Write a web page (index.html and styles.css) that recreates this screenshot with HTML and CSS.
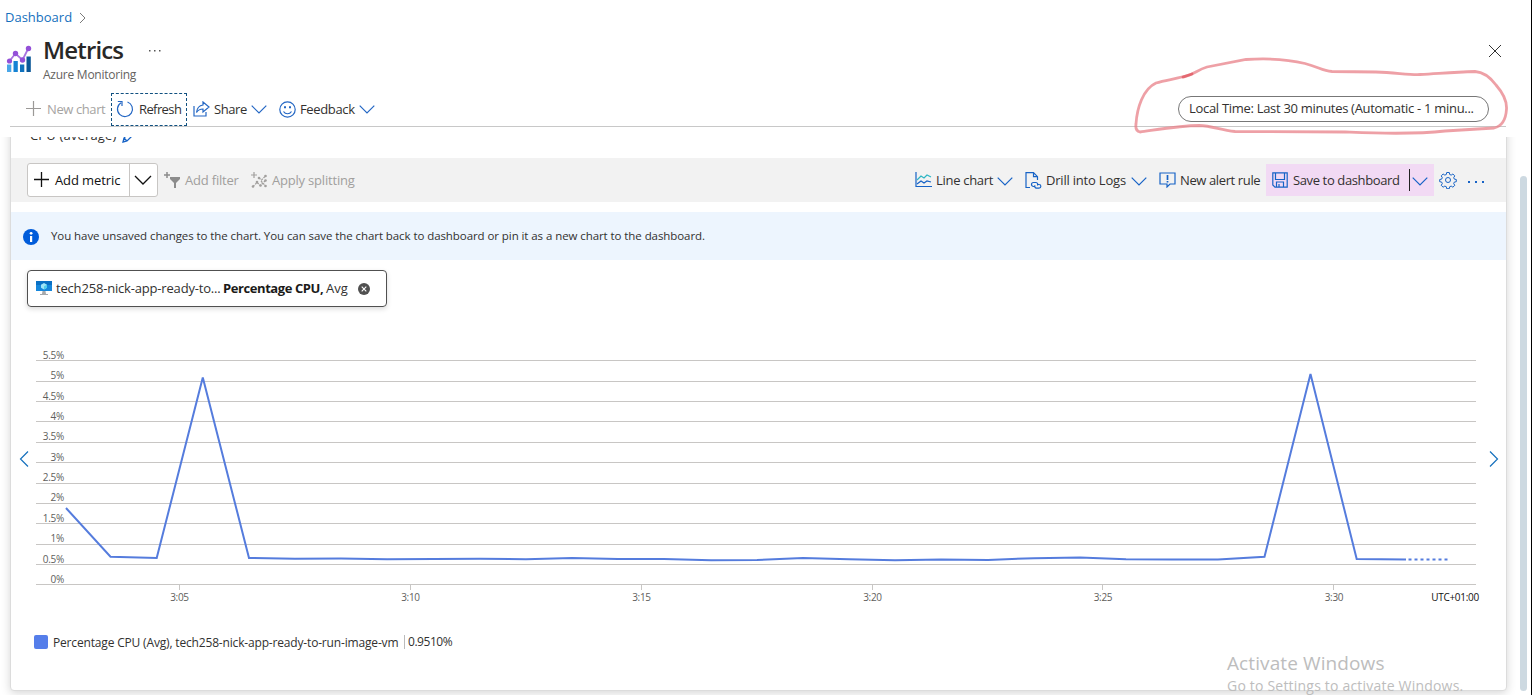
FILE: index.html
```html
<!DOCTYPE html>
<html lang="en">
<head>
<meta charset="utf-8">
<title>Metrics</title>
<link rel="stylesheet" href="styles.css">
</head>
<body>
<div class="page">
  <header class="head">
    <nav class="crumbs"><a class="crumb">Dashboard</a><svg class="crumb-arrow" width="8" height="12" viewBox="0 0 8 12"><path d="M1 1l5 5-5 5"/></svg></nav>
    <div class="title-row">
      <svg class="logo" width="26" height="30" viewBox="0 0 26 30">
        <path fill="#4aa7e8" d="M1 19.500h4.300v7.500H1z"/><path fill="#1583d4" d="M7.500 16h4.300v11H7.500z"/><path fill="#0f71bd" d="M14 19.500h4.300v7.500H14z"/><path fill="#0b5797" d="M20.500 11.500h4.300V27h-4.300z"/>
        <path fill="none" stroke="#a873e0" stroke-width="1.800" d="M3.500 16l6-7.500 7 6.500 6-12"/>
        <g fill="#9450d8"><circle cx="3.500" cy="16" r="2.600"/><circle cx="9.500" cy="8.500" r="2.700"/><circle cx="16.500" cy="15" r="2.700"/><circle cx="22.500" cy="3.500" r="2.700"/></g>
      </svg>
      <div class="titles"><h1 class="title">Metrics</h1><div class="subtitle">Azure Monitoring</div></div>
      <svg class="more" width="12" height="4" viewBox="0 0 12 4"><path d="M0 1h1.500v1.500H0zM5 1h1.500v1.500H5zM10 1h1.500v1.500H10z"/></svg>
      <svg class="close" width="14" height="14" viewBox="0 0 14 14"><path d="M1 1l12 12M13 1L1 13"/></svg>
    </div>
    <div class="commands">
      <div class="cmd new-chart"><svg width="16" height="16" viewBox="0 0 16 16"><path d="M0 7.500h15M7.500 0v15"/></svg><span>New chart</span></div>
      <div class="cmd refresh"><svg width="18" height="18" viewBox="0 0 18 18"><path d="M11.500 2A7.500 7.500 0 1 1 5 2.700M1.800 1.500H6V6"/></svg><span>Refresh</span></div>
      <div class="cmd share"><svg width="17" height="16" viewBox="0 0 17 16"><path d="M1 5v10h12v-4M10 1l6 5-6 5V8C7 8 5 9 3.500 11.500 4 7 6.500 4.500 10 4z"/></svg><span>Share</span><svg class="chev" width="16" height="9" viewBox="0 0 16 9"><path d="M.7 .7L8 8l7.300-7.300"/></svg></div>
      <div class="cmd feedback"><svg width="17" height="17" viewBox="0 0 17 17"><circle cx="8.500" cy="8.500" r="7.700"/><path d="M4.500 10.500c2 3 6 3 8 0"/><path stroke-width="2" d="M5 6.300h2M10 6.300h2"/></svg><span>Feedback</span><svg class="chev" width="16" height="9" viewBox="0 0 16 9"><path d="M.7 .7L8 8l7.300-7.300"/></svg></div>
      <div class="time-pill"><span>Local Time: Last 30 minutes (Automatic - 1 minu...</span></div>
    </div>
  </header>

  <main class="scroll">
    <section class="card">
      <div class="chart-title"><span>CPU (average)</span><svg width="11" height="11" viewBox="0 0 11 11"><path d="M1 10l1-4 5-5 3 3-5 5zM2 6l3 3"/></svg></div>
      <div class="toolbar">
        <div class="add-metric">
          <div class="add-main"><svg width="16" height="16" viewBox="0 0 16 16"><path d="M0 7.500h15M7.500 0v15"/></svg><span>Add metric</span></div>
          <div class="add-drop"><svg width="18" height="10" viewBox="0 0 18 10"><path d="M1 1l8 8 8-8"/></svg></div>
        </div>
        <div class="tool filter"><svg width="17" height="17" viewBox="0 0 17 17"><path fill="#8c8c8c" stroke="none" d="M6 5h10v2l-4 4v5H10v-5L6 7z"/><path stroke="#8c8c8c" stroke-width="1.500" d="M0 3h6M3 0v6"/></svg><span>Add filter</span></div>
        <div class="tool split"><svg width="17" height="17" viewBox="0 0 17 17"><path d="M0 3h6M3 0v6"/><path stroke-dasharray="2 1" d="M2 14.500l4-4 3.500 3 5-5M8 6l2.500 2L14.500 4M10 9l4.500 5"/><g fill="#a19f9d" stroke="none"><circle cx="2" cy="14.500" r="1.300"/><circle cx="6" cy="10" r="1.300"/><circle cx="9.500" cy="13.500" r="1.300"/><circle cx="14.500" cy="4" r="1.300"/><circle cx="8" cy="6" r="1.300"/><circle cx="14.500" cy="8.500" r="1.300"/><circle cx="14.500" cy="14" r="1.300"/></g></svg><span>Apply splitting</span></div>
        <div class="tool line"><svg width="17" height="16" viewBox="0 0 17 16"><path d="M1 0v14.500h16"/><path d="M2 12l4-3 3 2 3-2 4 1"/><path stroke="#2db6c4" d="M2 8l4-4 3 2 3-3 4 2"/></svg><span>Line chart</span><svg class="chev" width="16" height="9" viewBox="0 0 16 9"><path d="M.7 .7L8 8l7.300-7.300"/></svg></div>
        <div class="tool drill"><svg width="17" height="17" viewBox="0 0 17 17"><path d="M5 15.500H1V.7h7.500l4 4V8M8.500 .7v4h4"/><path d="M10 14.500H8.500a2 2 0 0 1 0-4H11a2 2 0 0 1 1.500 3M12 12.500h2a1.800 1.800 0 0 1 0 3.700h-2.500a2 2 0 0 1-1.500-3"/></svg><span>Drill into Logs</span><svg class="chev" width="16" height="9" viewBox="0 0 16 9"><path d="M.7 .7L8 8l7.300-7.300"/></svg></div>
        <div class="tool alert"><svg width="17" height="16" viewBox="0 0 17 16"><path d="M1 1h15v11h-5l-3 3v-3H1z"/><path stroke-width="1.700" d="M8.500 3v5M8.500 9v1.600"/></svg><span>New alert rule</span></div>
        <div class="tool save"><svg width="16" height="16" viewBox="0 0 16 16"><path d="M.8 .8h14.400v14.400H3L.8 13zM3.500 1v6.500h9V1M4.500 15v-5h7v5M7 12v3"/></svg><span>Save to dashboard</span><i class="divider"></i><svg class="chev" width="16" height="9" viewBox="0 0 16 9"><path d="M.7 .7L8 8l7.300-7.300"/></svg></div>
        <svg class="gear" width="18" height="18" viewBox="0 0 18 18"><circle cx="9" cy="9" r="2.500"/><path d="M7.700 1.500h2.600l.4 2 1.500.6 1.700-1.100 1.900 1.900-1.100 1.700.6 1.500 2 .4v2.200l-2 .4-.6 1.500 1.100 1.700-1.900 1.900-1.700-1.100-1.500.6-.4 2H7.700l-.4-2-1.500-.6-1.700 1.100-1.900-1.900 1.100-1.700-.6-1.500-2-.4V8.500l2-.4.6-1.500-1.100-1.700 1.900-1.900 1.700 1.100 1.500-.6z"/></svg>
        <svg class="dots" width="16" height="4" viewBox="0 0 16 4"><path d="M0 1h2v2H0zM7 1h2v2H7zM14 1h2v2h-2z"/></svg>
      </div>
      <div class="notice"><svg width="16" height="16" viewBox="0 0 16 16"><circle cx="8" cy="8" r="8" fill="#015cda"/><path fill="#fff" d="M7 7h2.200v6H7z"/><circle cx="8.100" cy="4.300" r="1.400" fill="#fff"/></svg><span>You have unsaved changes to the chart. You can save the chart back to dashboard or pin it as a new chart to the dashboard.</span></div>
      <div class="metric-chip">
        <svg class="vm" width="16" height="16" viewBox="0 0 16 16"><path fill="#1687dc" d="M0 1h16v10H0z"/><path fill="#0a70c4" d="M0 1h16v4H0z"/><path fill="#9fe5f8" d="M8 3l3 1.700v3L8 9.500 5 7.700v-3z"/><path fill="#51cdea" d="M8 6.200l3-1.500v3L8 9.500z"/><path fill="#a6a9ac" d="M6.500 11h3l.5 3h2v1H4v-1h2z"/></svg>
        <span class="res">tech258-nick-app-ready-to...</span><b class="metric">Percentage CPU,</b><span class="agg">Avg</span>
        <svg class="remove" width="12" height="12" viewBox="0 0 12 12"><circle cx="6" cy="6" r="6" fill="#505050"/><path stroke="#fff" stroke-width="1.100" d="M3.700 3.700l4.600 4.600M8.300 3.700L3.700 8.300"/></svg>
      </div>
      <svg class="chart" width="1495" height="280" viewBox="11 340 1495 280">
        <path class="grid" d="M36 360.500H1476M36 381.500H1476M36 401.500H1476M36 421.500H1476M36 442.500H1476M36 462.500H1476M36 483.500H1476M36 503.500H1476M36 523.500H1476M36 544.500H1476M36 564.500H1476M36 584.500H1476M179.500 584v6M410.500 584v6M641.500 584v6M872.500 584v6M1102.500 584v6M1333.500 584v6"/>
        <g class="y-labels"><text x="64" y="359">5.5%</text><text x="64" y="379">5%</text><text x="64" y="400">4.5%</text><text x="64" y="420">4%</text><text x="64" y="440">3.5%</text><text x="64" y="461">3%</text><text x="64" y="481">2.5%</text><text x="64" y="501">2%</text><text x="64" y="522">1.5%</text><text x="64" y="542">1%</text><text x="64" y="563">0.5%</text><text x="64" y="583">0%</text></g>
        <g class="x-labels"><text x="179.500" y="601">3:05</text><text x="410.500" y="601">3:10</text><text x="641.500" y="601">3:15</text><text x="872.500" y="601">3:20</text><text x="1103" y="601">3:25</text><text x="1334" y="601">3:30</text><text class="utc" x="1455" y="601">UTC+01:00</text></g>
        <polyline class="series" points="66,508 110.500,556.700 156.700,558 202.800,377.500 249,558 295,558.700 341,558.500 387,559.200 434,559 480,558.700 526,559.200 572,558 618,559 664,559 711,560.200 757,560 803,558 849,559.200 895,560.200 941,559.500 988,559.900 1034,558.200 1080,557.600 1126,559.200 1172,559.500 1218,559.500 1264.500,556.700 1310.500,374 1356.700,559 1406,559.500"/>
        <path class="series dotted" d="M1408.500 559.500H1449"/>
        <path class="nav" d="M28 451.500l-7.500 7.500 7.500 7.500M1490 451.500l7.500 7.500-7.500 7.500"/>
      </svg>
      <div class="legend"><i class="swatch"></i><span class="legend-name">Percentage CPU (Avg), tech258-nick-app-ready-to-run-image-vm</span><span class="legend-value">0.9510%</span></div>
    </section>
    <i class="scrollbar"></i>
  </main>
</div>
<svg class="scribble" width="1532" height="150" viewBox="0 0 1532 150">
  <path d="M1184 77C1195 74 1197 70 1207 67L1246 59.500C1270 58 1291 60 1305 63.500C1319 67 1322 71 1332 71.500L1376 72C1398 73 1410 75 1420 74.500C1445 73 1455 72 1475 71.500C1484 72 1490 77 1496 85C1503 93 1507 101 1506.500 109C1506 118 1503 126 1494 128L1445 131C1410 135 1370 133 1345 132L1235 131.500C1219 129.500 1212 126 1199 125.500C1181 125.500 1155 130 1140 132Q1135 131 1136 124C1137 108 1143 89 1156 83C1167 79.500 1178 79 1192 74"/>
  <path class="overlap" d="M1183 77l9-3"/>
</svg>
<div class="watermark"><div class="wm-title">Activate Windows</div><div class="wm-text">Go to Settings to activate Windows.</div></div>
</body>
</html>
```
FILE: styles.css
```css
* { box-sizing: border-box; }
body { margin: 0; background: #fff; overflow: hidden; font-family: "Open Sans", "Noto Sans", sans-serif; font-size: 13px; letter-spacing: -0.3px; color: #323130; }
svg { display: block; flex: none; fill: none; stroke: none; }
span, b { white-space: nowrap; }
.page { width: 1532px; height: 695px; border-right: 1px solid #000; display: flex; flex-direction: column; }

.head { height: 137px; flex: none; }
.crumbs { height: 34px; padding-left: 5px; display: flex; align-items: center; gap: 7px; }
.crumb { color: #1570bd; letter-spacing: 0; }
.crumb-arrow { stroke: #7a7a7a; margin-top: 2px; }
.title-row { height: 58px; display: flex; padding-left: 6px; }
.logo { margin-top: 11px; }
.titles { width: 105px; margin-left: 11px; }
.title { margin: 0; font-size: 24px; line-height: 32px; font-weight: 600; letter-spacing: -0.85px; color: #292827; }
.subtitle { font-size: 12px; line-height: 17px; letter-spacing: -0.25px; color: #646260; white-space: nowrap; }
.more { margin: 15px 0 0 1px; fill: #555; }
.close { margin: 10px 29px 0 auto; stroke: #333; }
.commands { height: 35px; margin: 0 25px 0 10px; border-bottom: 1px solid #c8c8c8; display: flex; align-items: center; }
.cmd { display: flex; align-items: center; height: 33px; }
.cmd svg { stroke: #2467c4; stroke-width: 1.2; }
.new-chart { width: 101px; padding-left: 16px; gap: 5px; color: #a6a4a2; letter-spacing: -0.4px; }
.new-chart svg { stroke: #9b9997; }
.refresh { width: 76px; border: 1px dashed #105080; padding-left: 4px; gap: 5px; letter-spacing: -0.6px; }
.share { width: 80px; padding-left: 6px; gap: 4px; letter-spacing: -0.4px; }
.feedback { width: 96px; margin-left: 12px; gap: 4px; letter-spacing: -0.35px; }
.share .chev, .feedback .chev { margin-left: auto; }
.time-pill { width: 311px; height: 26px; margin-left: auto; margin-right: 17px; border: 1px solid #777; border-radius: 13px; padding-left: 10px; line-height: 23px; }

.scroll { flex: 1; position: relative; overflow: hidden; display: flex; }
.card { width: 1497px; height: 568px; margin: -14px 0 0 10px; border: 1px solid #dcdcdc; border-radius: 4px; box-shadow: 0 2px 10px rgba(0,0,0,.17); background: #fff; flex: none; }
.chart-title { height: 34px; padding: 0 0 12px 19px; display: flex; align-items: center; gap: 6px; letter-spacing: 0.15px; }
.chart-title svg { stroke: #1763c6; stroke-width: 1.3; margin-top: 4px; }
.toolbar { height: 44px; background: #f2f2f2; display: flex; align-items: center; }
.add-metric { width: 131px; height: 34px; margin-left: 16px; border: 1px solid #c8c6c4; border-radius: 3px; background: #fff; display: flex; color: #111; letter-spacing: -0.1px; font-weight: 500; }
.add-metric svg { stroke: #111; stroke-width: 1.3; }
.add-main { width: 102px; border-right: 1px solid #c8c6c4; display: flex; align-items: center; padding-left: 6px; gap: 5px; }
.add-drop { flex: 1; display: flex; align-items: center; padding-left: 4px; }
.tool { display: flex; align-items: center; gap: 4px; height: 32px; }
.tool svg { stroke: #1763c6; stroke-width: 1.2; }
.tool .chev { margin-left: auto; margin-top: 2px; }
.filter { width: 87px; padding-left: 6px; color: #a19f9d; letter-spacing: -0.2px; }
.split { width: 113px; padding-left: 6px; color: #a19f9d; letter-spacing: -0.2px; }
.split svg { stroke: #a19f9d; }
.line { width: 98px; margin-left: 557px; }
.drill { width: 122px; margin-left: 12px; letter-spacing: -0.2px; }
.alert { width: 103px; margin-left: 12px; letter-spacing: -0.38px; }
.save { width: 168px; height: 32px; margin-left: 4px; padding: 0 6px 0 6px; gap: 5px; background: #f2daf4; letter-spacing: -0.38px; }
.divider { width: 1px; height: 22px; background: #222; margin-left: auto; }
.save .chev { margin-left: -3px; }
.gear { margin-left: 5px; stroke: #1763c6; }
.dots { margin: 3px 0 0 11px; fill: #1763c6; }
.notice { height: 48px; margin-top: 10px; padding-left: 12px; background: #edf5fe; display: flex; align-items: center; gap: 12px; font-size: 11.5px; letter-spacing: -0.075px; }
.notice span { margin-bottom: 2px; }
.notice svg { margin-top: 1px; }
.metric-chip { width: 360px; height: 37px; margin: 10px 0 0 16px; padding-left: 8px; border: 1px solid #505050; border-radius: 4px; box-shadow: 0 2px 5px rgba(0,0,0,.15); display: flex; align-items: center; }
.metric-chip span, .metric-chip b { margin-bottom: 2px; }
.vm { margin-bottom: 1px; }
.res { width: 167px; margin-left: 4px; letter-spacing: -0.18px; }
.metric { width: 103px; color: #1b1a19; letter-spacing: -0.42px; }
.agg { width: 22px; letter-spacing: 0; }
.remove { margin-left: 10px; }
.chart { margin-top: 33px; }
.grid { stroke: #c8c6c4; shape-rendering: crispEdges; }
.y-labels, .x-labels { font-size: 10px; letter-spacing: -0.3px; fill: #605e5c; }
.y-labels { text-anchor: end; }
.x-labels { text-anchor: middle; }
.utc { fill: #111; }
.series { stroke: #557cdd; stroke-width: 2; }
.dotted { stroke-dasharray: 3 3; }
.nav { stroke: #1570bd; stroke-width: 1.2; }
.legend { margin: 12px 0 0 23px; height: 20px; display: flex; align-items: center; font-size: 12px; }
.swatch { width: 14px; height: 14px; border-radius: 2px; background: #557eea; }
.legend-name { width: 351px; margin-left: 5px; letter-spacing: -0.17px; }
.legend-value { border-left: 1px solid #bbb; padding-left: 3px; line-height: 14px; letter-spacing: -0.45px; }
.scrollbar { width: 7px; height: 515px; margin: 39px 0 0 13px; border-radius: 4px; background: #cdd9e1; flex: none; }

/* Overlays above the page */
.scribble { position: absolute; left: 0; top: 0; stroke: #e88088; stroke-width: 2.8; stroke-linecap: round; stroke-opacity: .75; }
.overlap { stroke: #e0555f; }
.watermark { position: absolute; left: 1227px; top: 651px; color: #bdbdbd; white-space: nowrap; letter-spacing: 0; }
.wm-title { font-size: 19px; line-height: 25px; letter-spacing: 0.1px; }
.wm-text { font-size: 14px; line-height: 20px; letter-spacing: 0.2px; }
```
